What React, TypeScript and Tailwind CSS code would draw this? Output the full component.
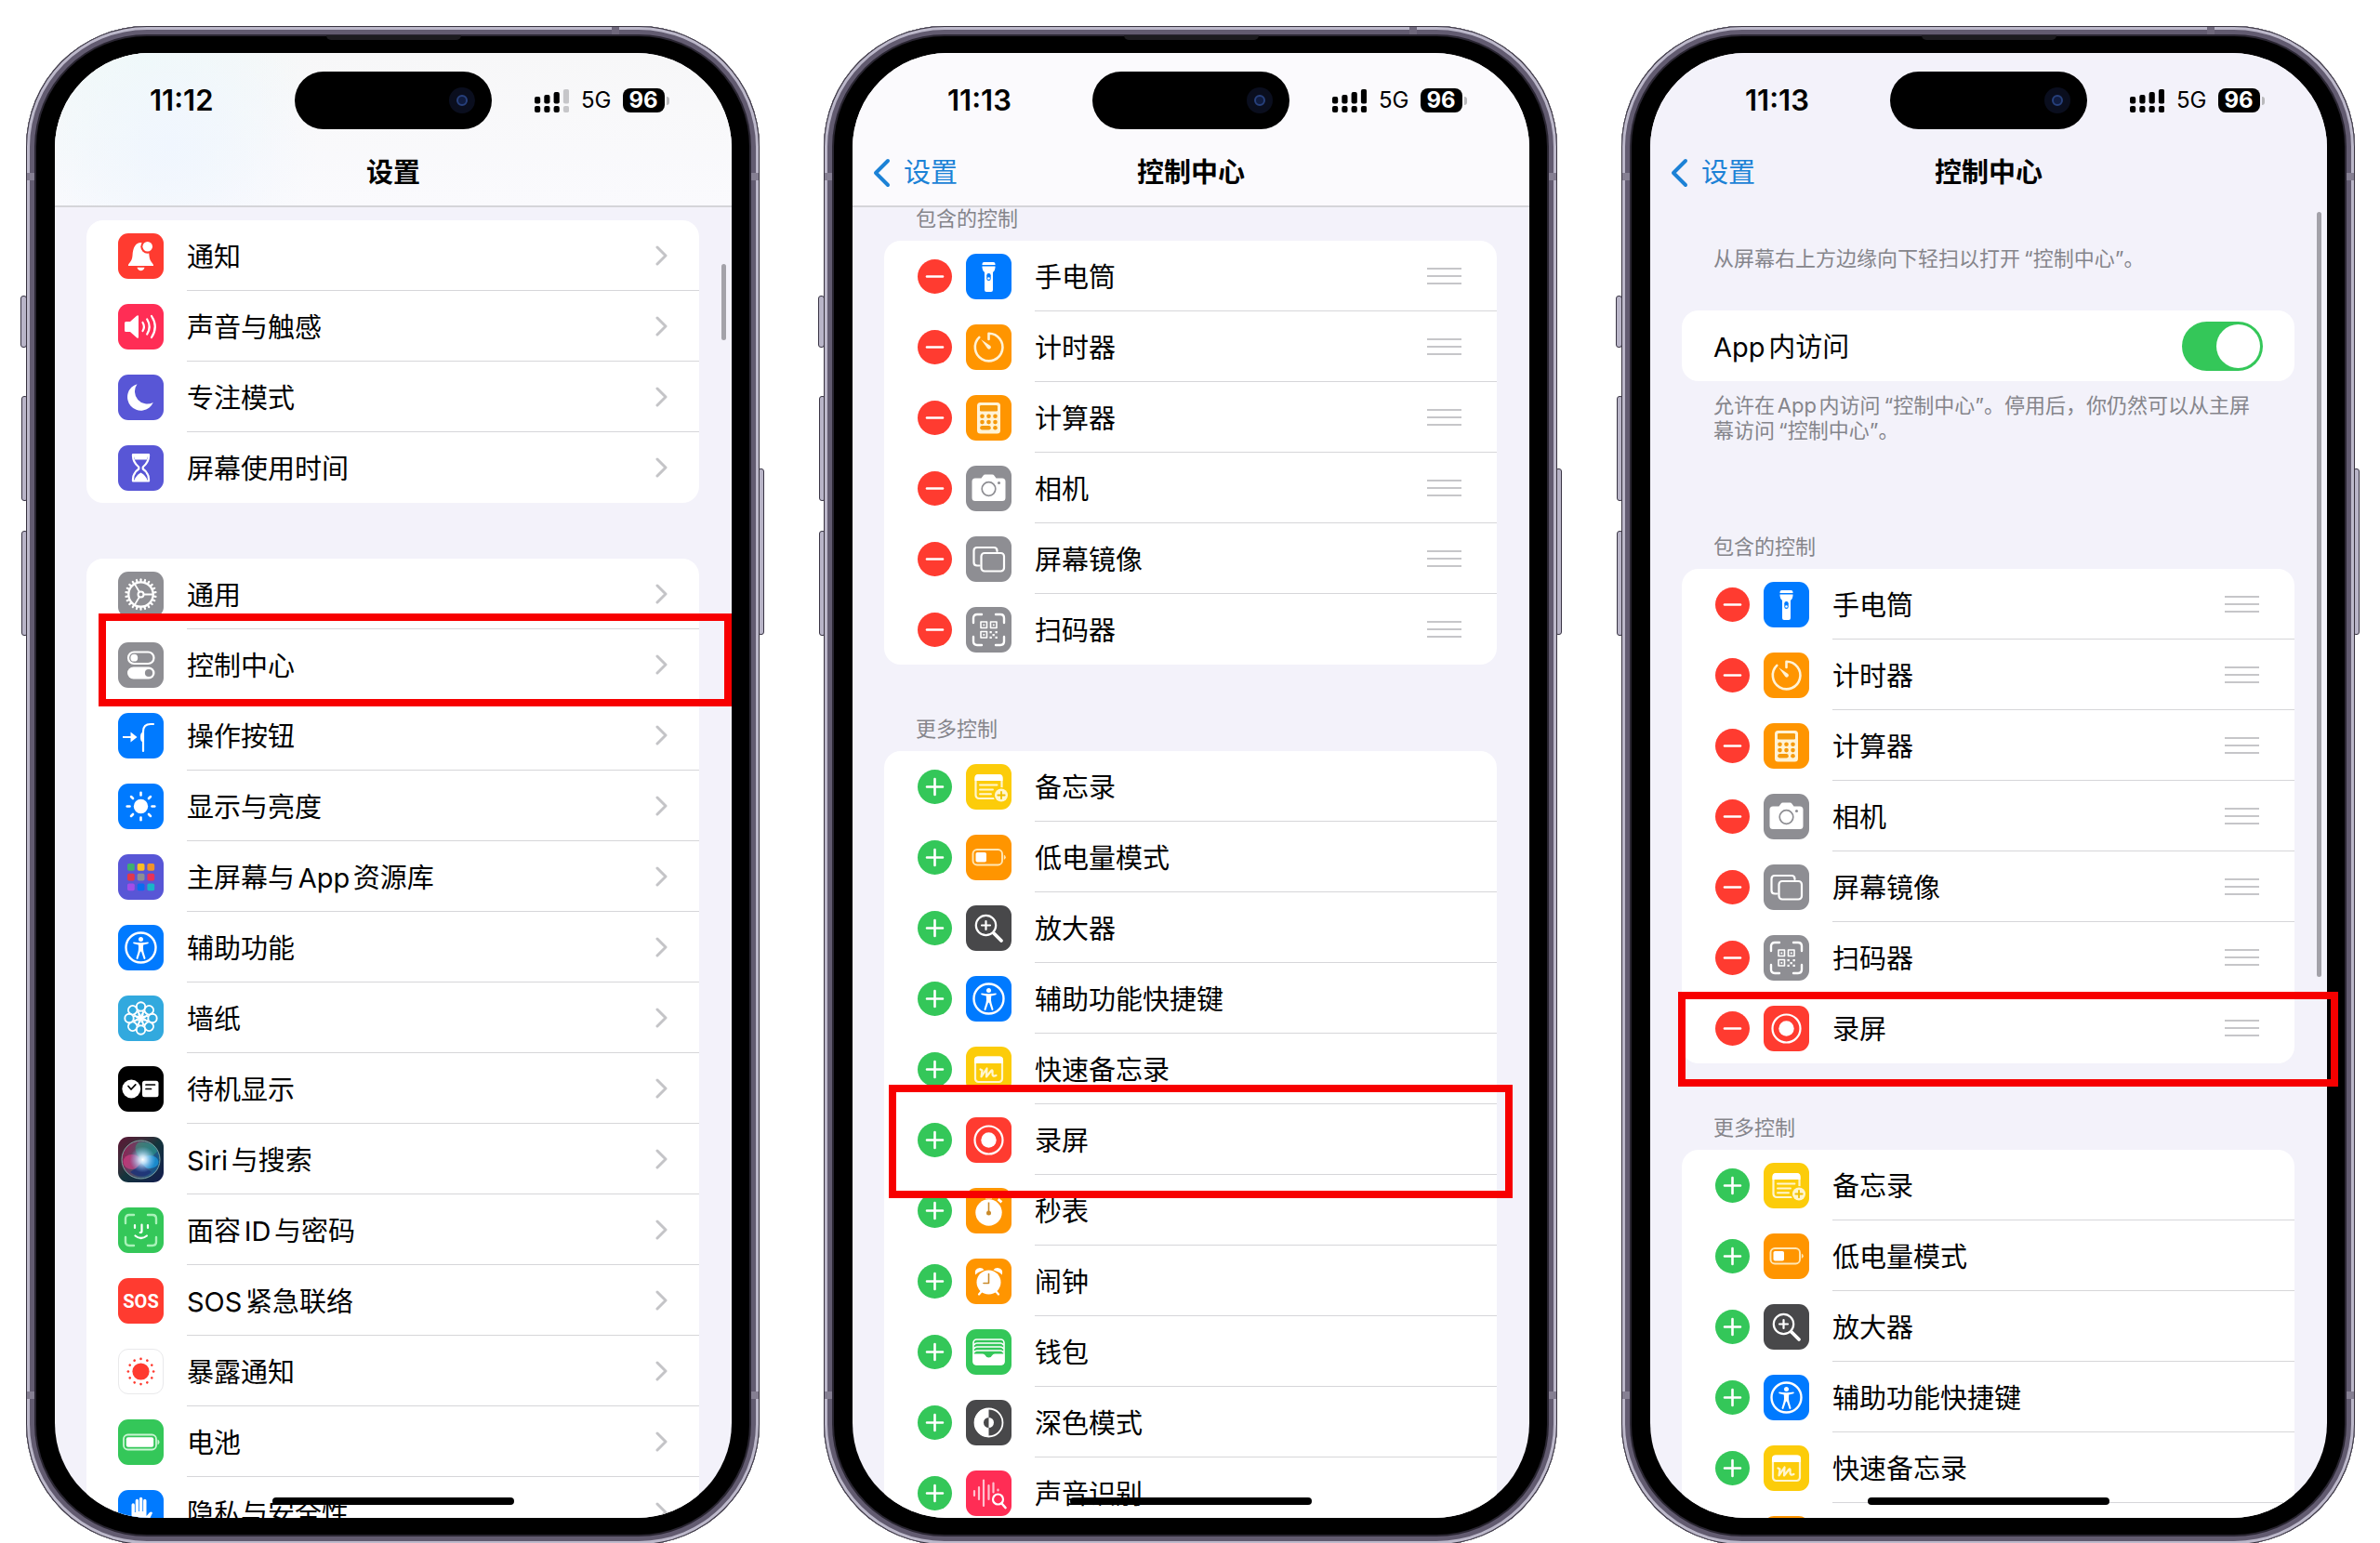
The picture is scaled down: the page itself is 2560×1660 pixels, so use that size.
import React from "react";

const range = (n: number) => Array.from({ length: n }, (_, i) => i);

/* ---------- icons, all drawn on a 49 x 49 tile ---------- */

const stroke = {
  fill: "none",
  stroke: "#fff",
  strokeWidth: 2.2,
  strokeLinecap: "round",
  strokeLinejoin: "round",
} as const;

const Brackets = ({ color = "#fff" }: { color?: string }) => (
  <path
    {...stroke}
    stroke={color}
    strokeWidth={2.4}
    d="M8 17v-5q0-4 4-4h5M32 8h5q4 0 4 4v5M41 32v5q0 4-4 4h-5M17 41h-5q-4 0-4-4v-5"
  />
);

const Person = () => (
  <>
    <circle cx="24.5" cy="24.5" r="16" {...stroke} strokeWidth={2.4} />
    <circle cx="24.5" cy="15.6" r="2.5" fill="#fff" />
    <path
      fill="#fff"
      d="M16.6 18.6q-1 .9.3 1.7l4.9 1.2q.6 4-.4 8l-1.9 6.3q0 1.6 1.8 1l2.7-8h1l2.7 8q1.8.6 1.8-1l-1.9-6.3q-1-4-.4-8l4.9-1.2q1.3-.8.3-1.7-7.9 1.5-15.8 0z"
    />
  </>
);

const icons: Record<string, { bg: string; art: React.ReactNode }> = {
  bell: {
    bg: "bg-[#ff3b30]",
    art: (
      <>
        <path fill="#fff" d="M11 35c-.6-2.6 4-3.6 4.500-11 .5-9 3.500-14 9-14s8.500 5 9 14c.5 7.400 5.100 8.400 4.500 11z" />
        <path fill="#fff" d="M20.5 36.8h8q-1 3.400-4 3.400t-4-3.400z" />
        <circle cx="31.7" cy="14.3" r="7.4" fill="#ff3b30" />
        <circle cx="31.7" cy="14.3" r="5.3" fill="#fff" />
      </>
    ),
  },
  sound: {
    bg: "bg-[#ff2d55]",
    art: (
      <>
        <path fill="#fff" d="M7 20.5q0-1.5 1.5-1.5H13l7-6.2q2-1.400 2 .8v21.800q0 2.200-2 .8L13 30H8.500Q7 30 7 28.500z" />
        <path {...stroke} d="M26.5 20q2.800 4.500 0 9M31.200 16.500q5 8 0 16M36 13q7.600 11.500 0 23" />
      </>
    ),
  },
  moon: {
    bg: "bg-[#5856d6]",
    art: <path fill="#fff" d="M20.5 10.2A14.5 14.5 0 1 0 37.8 30 13.5 13.5 0 0 1 20.5 10.2z" />,
  },
  hourglass: {
    bg: "bg-[#5856d6]",
    art: (
      <>
        <path {...stroke} d="M16 10h17q.6 8-6.3 13.5v2Q33.6 30 33 38.5H16q-.6-8.5 6.3-13v-2Q15.4 18 16 10z" />
        <path fill="#fff" d="M17 10h15q.3 3-1.2 5.5H18.2Q16.700 13 17 10zM17.500 38q1-5 7-8.500 6 3.500 7 8.500z" />
      </>
    ),
  },
  gear: {
    bg: "bg-[#8e8e93]",
    art: (
      <g {...stroke}>
        <circle cx="24.5" cy="24.5" r="13.2" strokeWidth={2.3} />
        <circle cx="24.5" cy="24.5" r="3" strokeWidth={2} />
        {range(22).map((i) => (
          <path key={i} d="M24.5 10.5v-2.2" transform={`rotate(${i * (360 / 22)} 24.5 24.5)`} />
        ))}
        <path strokeWidth={1.8} d="M27.7 24.5h10M22.9 21.7l-5.3-8.8M22.9 27.3l-5.3 8.8" />
      </g>
    ),
  },
  toggles: {
    bg: "bg-[#8e8e93]",
    art: (
      <>
        <rect x="11" y="10.5" width="27.5" height="12.5" rx="6.2" {...stroke} />
        <circle cx="17.3" cy="16.7" r="3.9" fill="#fff" />
        <rect x="10" y="26.5" width="29.5" height="13" rx="6.5" fill="#fff" />
        <circle cx="33" cy="33" r="4.1" fill="#8e8e93" />
      </>
    ),
  },
  action: {
    bg: "bg-[#007aff]",
    art: (
      <>
        <path {...stroke} d="M27 41V20q0-8 8-8h3" />
        <path {...stroke} strokeLinecap="butt" d="M5 26h11" />
        <path fill="#fff" d="M13.5 20.5l7 5.5-7 5.5zM26 21q-2 .5-2 5t2 5z" />
      </>
    ),
  },
  sun: {
    bg: "bg-[#007aff]",
    art: (
      <>
        <circle cx="24.5" cy="24.5" r="7.7" fill="#fff" />
        {range(8).map((i) => (
          <path key={i} {...stroke} strokeWidth={2.6} d="M24.5 12.5v-2.8" transform={`rotate(${i * 45} 24.5 24.5)`} />
        ))}
      </>
    ),
  },
  apps: {
    bg: "bg-[#5856d6]",
    art: (
      <>
        {["#3fae6f", "#fbbf24", "#f0932b", "#e0384b", "#8e8e93", "#e8325a", "#a24de8", "#0a6cf0", "#18b5c8"].map((c, i) => (
          <rect key={c} x={10 + (i % 3) * 10.7} y={10 + Math.floor(i / 3) * 10.7} width="7.8" height="7.8" rx="1.8" fill={c} />
        ))}
      </>
    ),
  },
  person: { bg: "bg-[#007aff]", art: <Person /> },
  flower: {
    bg: "bg-[#32a9de]",
    art: (
      <g fill="none" stroke="#fff" strokeWidth={1.9}>
        {range(8).map((i) => (
          <g key={i} transform={`rotate(${i * 45} 24.5 24.5)`}>
            <circle cx="24.5" cy="12" r="4.7" />
            <path d="M24.5 24.5q-3.600-4-2-8.200M24.500 24.500q3.600-4 2-8.200" strokeWidth={1.5} />
          </g>
        ))}
      </g>
    ),
  },
  standby: {
    bg: "bg-black",
    art: (
      <>
        <circle cx="14.3" cy="24.5" r="9.9" fill="#fff" />
        <rect x="26" y="15.8" width="17.5" height="17.4" rx="2.5" fill="#fff" />
        <path {...stroke} stroke="#000" strokeWidth={1.7} d="M11 21.5l3 3.5 4.800-5.200M30 20h9.500M30 24.500h5.500" />
      </>
    ),
  },
  siri: {
    bg: "bg-linear-to-br from-[#5c0f35] via-[#14343b] to-[#141a4e]",
    art: (
      <>
        <defs>
          <radialGradient id="siri-core" cx="52%" cy="50%" r="50%">
            <stop offset="0" stopColor="#fff" />
            <stop offset=".3" stopColor="#d5ecff" stopOpacity=".85" />
            <stop offset="1" stopColor="#7fc4ff" stopOpacity="0" />
          </radialGradient>
          <linearGradient id="siri-orb" x1="0" y1=".4" x2="1" y2=".6">
            <stop offset="0" stopColor="#d01f6c" />
            <stop offset=".45" stopColor="#6f6d8c" />
            <stop offset="1" stopColor="#0f7fc9" />
          </linearGradient>
        </defs>
        <circle cx="24.5" cy="24.5" r="20.5" fill="url(#siri-orb)" fillOpacity=".55" stroke="#7fa6a3" strokeWidth="1" />
        <path fill="#2bb08c" fillOpacity=".45" d="M24.5 24Q14 12 22 6q16-2 20 10-8 9-17.500 8z" />
        <ellipse cx="15" cy="27" rx="9.5" ry="8" fill="#e0408a" fillOpacity=".6" />
        <ellipse cx="34" cy="27" rx="9.5" ry="7" fill="#1aa0e8" fillOpacity=".7" />
        <path fill="#1c2f78" fillOpacity=".8" d="M13 38q7-4 12-10 5 6 11 10-11 9-23 0z" />
        <circle cx="26" cy="24.5" r="14" fill="url(#siri-core)" />
      </>
    ),
  },
  face: {
    bg: "bg-[#34c759]",
    art: (
      <>
        <Brackets color="#a9f2b9" />
        <path {...stroke} d="M18 19v3M32 19v3M25.5 18.5v7q0 1.5-1.8 1.5M18.5 30.5q6.2 5 12.4 0" />
      </>
    ),
  },
  sos: {
    bg: "bg-[#ff3b30]",
    art: (
      <text x="24.5" y="32" textAnchor="middle" fill="#fff" className="font-['Roboto',sans-serif] text-[20px] font-bold">
        SOS
      </text>
    ),
  },
  exposure: {
    bg: "bg-white border border-[#e9e9eb]",
    art: (
      <g fill="#ff3b30">
        <circle cx="24.5" cy="24.5" r="9.5" />
        {range(12).map((i) => (
          <circle key={i} cx="24.5" cy="10.3" r="1.4" transform={`rotate(${i * 30} 24.5 24.5)`} />
        ))}
      </g>
    ),
  },
  battery: {
    bg: "bg-[#34c759]",
    art: (
      <>
        <rect x="6" y="16.5" width="35" height="16" rx="4.5" {...stroke} strokeWidth={1.8} stroke="#c9f5d3" />
        <rect x="8.8" y="19.3" width="29.4" height="10.4" rx="2" fill="#fff" />
        <path fill="#c9f5d3" d="M42.5 21.5q2 1 2 3t-2 3z" />
      </>
    ),
  },
  hand: {
    bg: "bg-[#007aff]",
    art: (
      <path
        fill="#fff"
        d="M14.5 16a1.7 1.7 0 0 1 3.4 0v8h.8V11.5a1.7 1.7 0 0 1 3.4 0V23h.8V9.5a1.7 1.7 0 0 1 3.4 0V23h.8V11.5a1.7 1.7 0 0 1 3.4 0V28l3.3-3.8q2.2-1.4 3.2.6L32 35q-3 6-9 6-8.5 0-8.5-9z"
      />
    ),
  },
  torch: {
    bg: "bg-[#007aff]",
    art: (
      <>
        <path fill="#fff" d="M17.5 11q0-2 2-2h10q2 0 2 2v1h-14zM17.5 13.5h14v1.5q0 2.5-2.5 5v19q0 2-2 2h-5q-2 0-2-2V20q-2.500-2.500-2.500-5z" />
        <rect x="22.3" y="21" width="4.4" height="8" rx="2.2" fill="#007aff" />
        <circle cx="24.5" cy="26.5" r="1.3" fill="#fff" />
      </>
    ),
  },
  timer: {
    bg: "bg-[#ff9500]",
    art: (
      <>
        <path {...stroke} stroke="#fff3d6" strokeWidth={2.6} d="M24.5 16v-6.3a14.8 14.8 0 1 1-10.2 4.2" />
        <path fill="#fff3d6" d="M16.3 16.3l10 6.8q1.400 1.600 0 3t-3 0z" />
      </>
    ),
  },
  calculator: {
    bg: "bg-[#ff9500]",
    art: (
      <>
        <rect x="12" y="8" width="25" height="33.5" rx="3.5" fill="#fff3d6" />
        <g fill="#f59a0c">
          <rect x="15" y="11" width="19" height="6.5" rx="1.2" />
          {range(6).map((i) => (
            <circle key={i} cx={17.5 + (i % 3) * 7} cy={22.8 + Math.floor(i / 3) * 6.3} r="2.3" />
          ))}
          <rect x="15.2" y="33" width="11.6" height="4.4" rx="2.2" />
          <circle cx="31.5" cy="35.2" r="2.3" />
        </g>
      </>
    ),
  },
  camera: {
    bg: "bg-[#8e8e93]",
    art: (
      <>
        <path fill="#fff" d="M10 13.5h6.5l2-2.8q.8-1.2 2.2-1.2h7.6q1.400 0 2.200 1.200l2 2.800H39q3.500 0 3.500 3.500v17.500q0 3.500-3.500 3.500H10q-3.500 0-3.500-3.500V17q0-3.500 3.500-3.500z" />
        <circle cx="24.5" cy="25" r="7.3" fill="none" stroke="#8e8e93" strokeWidth="1.7" />
        <circle cx="35.5" cy="18.5" r="1.5" fill="#8e8e93" />
      </>
    ),
  },
  mirror: {
    bg: "bg-[#8e8e93]",
    art: (
      <>
        <path {...stroke} d="M14.5 31.5H12q-3.5 0-3.5-3.5V15.5Q8.5 12 12 12h18q3.5 0 3.5 3.5v.5" />
        <rect x="16.5" y="18" width="24.5" height="19.5" rx="3.5" {...stroke} />
      </>
    ),
  },
  qr: {
    bg: "bg-[#8e8e93]",
    art: (
      <>
        <Brackets />
        <g {...stroke} strokeWidth={1.6}>
          <rect x="16" y="16" width="6.5" height="6.5" />
          <rect x="26.5" y="16" width="6.5" height="6.5" />
          <rect x="16" y="26.5" width="6.5" height="6.5" />
        </g>
        <path
          fill="#fff"
          d="M18.4 18.4h1.8v1.8h-1.8zM28.9 18.4h1.8v1.8h-1.8zM18.4 28.9h1.8v1.8h-1.8zM25.5 26h2.3v2.3h-2.3zM31.5 26h2.3v2.3h-2.3zM28.5 28.9h2.3v2.3h-2.3zM25.5 31.7h2.3V34h-2.3zM31.5 31.7h2.3V34h-2.3z"
        />
      </>
    ),
  },
  notes: {
    bg: "bg-[#fccc0a]",
    art: (
      <>
        <rect x="10.5" y="12" width="28" height="25" rx="3.5" {...stroke} stroke="#fff6cf" />
        <path fill="#fff" d="M9.5 18v-3.5q0-3.5 3.5-3.5h23q3.5 0 3.5 3.5V18z" />
        <path {...stroke} stroke="#fff6cf" strokeWidth={1.9} d="M15 22.5h18.5M15 27.5h14M15 32.3h12" />
        <circle cx="38" cy="33.5" r="8.5" fill="#fccc0a" />
        <circle cx="38" cy="33.5" r="7" fill="#fff6cf" />
        <path {...stroke} stroke="#f0c000" strokeWidth={1.8} d="M38 29.8v7.4M34.3 33.5h7.4" />
      </>
    ),
  },
  lowpower: {
    bg: "bg-[#ff9500]",
    art: (
      <>
        <rect x="7.5" y="16" width="31.5" height="16.5" rx="4.5" {...stroke} strokeWidth={1.9} stroke="#ffe7b5" />
        <rect x="10.5" y="19" width="11.5" height="10.5" rx="1.8" fill="#fff" />
        <path fill="#ffe7b5" d="M40.8 21.5q2 1 2 2.8t-2 2.8z" />
      </>
    ),
  },
  magnifier: {
    bg: "bg-[#48484a]",
    art: (
      <>
        <circle cx="21.5" cy="21.5" r="10.7" {...stroke} />
        <path {...stroke} d="M21.5 17v9M17 21.5h9" />
        <path {...stroke} strokeWidth={3.8} d="M30 30l8 8" />
      </>
    ),
  },
  quicknote: {
    bg: "bg-[#fccc0a]",
    art: (
      <>
        <rect x="10" y="11.5" width="29" height="26.5" rx="3.5" {...stroke} stroke="#fff6cf" />
        <path fill="#fff" d="M9 18v-4q0-3.5 3.5-3.5h24Q40 10.5 40 14v4z" />
        <path {...stroke} stroke="#fff6cf" d="M15.5 24.5l2 1-1 7 6-9-.5 9 5.5-7q1.5-.5 1 2.5-.5 5 4 3" />
      </>
    ),
  },
  record: {
    bg: "bg-[#ff3b30]",
    art: (
      <>
        <circle cx="24.5" cy="24.5" r="15" {...stroke} />
        <circle cx="24.5" cy="24.5" r="8.2" fill="#fff" />
      </>
    ),
  },
  stopwatch: {
    bg: "bg-[#ff9500]",
    art: (
      <>
        <circle cx="24.5" cy="26.5" r="14.2" fill="#fff" />
        <path fill="#fff" d="M21 7.5h7v4h-7zM35.5 11l3.8 3.2-1.8 2.2-3.8-3.2z" />
        <path stroke="#c98a2a" strokeWidth="1.6" d="M24.5 15.5v11" />
        <circle cx="24.5" cy="27" r="2.5" fill="#c98a2a" />
      </>
    ),
  },
  alarm: {
    bg: "bg-[#ff9500]",
    art: (
      <>
        <path {...stroke} d="M14 38.5l3-3.5M35 38.5L32 35" />
        <path fill="#fff" d="M10 17.5q-1.5-7 5-7.5 3 0 4.5 2.2-6 2-9.5 5.3zM39 17.5q1.5-7-5-7.5-3 0-4.5 2.2 6 2 9.5 5.3z" />
        <circle cx="24.5" cy="25.5" r="13" fill="#fff" />
        <path {...stroke} stroke="#c98a2a" strokeWidth={1.6} d="M24.5 16.5v10h-5.5" />
      </>
    ),
  },
  wallet: {
    bg: "bg-[#34c759]",
    art: (
      <>
        <rect x="8" y="11" width="33" height="27" rx="3.5" {...stroke} strokeWidth={1.6} />
        <path {...stroke} strokeWidth={1.6} d="M9 16.5q1-1.5 3-1.5h25q2 0 3 1.5M9 20.5Q10 19 12 19h25q2 0 3 1.5M9 24.5Q10 23 12 23h25q2 0 3 1.5" />
        <path fill="#fff" d="M7.5 26.5H18q2 0 2.7 1.5 1.3 2.5 3.8 2.5t3.8-2.5Q29 26.5 31 26.5h10.5V35q0 3.5-3.5 3.5H11q-3.5 0-3.5-3.5z" />
      </>
    ),
  },
  darkmode: {
    bg: "bg-[#48484a]",
    art: (
      <>
        <circle cx="24.5" cy="24.5" r="15" {...stroke} strokeWidth={1.8} />
        <path fill="#fff" d="M24.5 9a15.5 15.5 0 0 0 0 31v-10a5.5 5.5 0 0 1 0-11z" />
        <path fill="#fff" d="M24.5 19a5.5 5.5 0 0 1 0 11z" />
      </>
    ),
  },
  soundsearch: {
    bg: "bg-[#ff2d55]",
    art: (
      <>
        <path {...stroke} stroke="#ffc2cf" d="M9 22v5M14 18v13M19 10.5v27.5M24.5 16v15M29.5 13.5v10M34.5 20.5v1" />
        <circle cx="34.5" cy="31" r="5.5" {...stroke} />
        <path {...stroke} strokeWidth={2.6} d="M38.5 35.5l4 4.5" />
      </>
    ),
  },
};

const Tile = ({ name }: { name: string }) => (
  <span className={`block size-[49px] shrink-0 overflow-hidden rounded-[11px] ${icons[name].bg}`}>
    <svg viewBox="0 0 49 49" className="size-full" aria-hidden="true">
      {icons[name].art}
    </svg>
  </span>
);

/* ---------- lists ---------- */

type Item = { icon: string; label: string };

const alerts: Item[] = [
  { icon: "bell", label: "通知" },
  { icon: "sound", label: "声音与触感" },
  { icon: "moon", label: "专注模式" },
  { icon: "hourglass", label: "屏幕使用时间" },
];

const general: Item[] = [
  { icon: "gear", label: "通用" },
  { icon: "toggles", label: "控制中心" },
  { icon: "action", label: "操作按钮" },
  { icon: "sun", label: "显示与亮度" },
  { icon: "apps", label: "主屏幕与App资源库" },
  { icon: "person", label: "辅助功能" },
  { icon: "flower", label: "墙纸" },
  { icon: "standby", label: "待机显示" },
  { icon: "siri", label: "Siri与搜索" },
  { icon: "face", label: "面容ID与密码" },
  { icon: "sos", label: "SOS紧急联络" },
  { icon: "exposure", label: "暴露通知" },
  { icon: "battery", label: "电池" },
  { icon: "hand", label: "隐私与安全性" },
];

const included: Item[] = [
  { icon: "torch", label: "手电筒" },
  { icon: "timer", label: "计时器" },
  { icon: "calculator", label: "计算器" },
  { icon: "camera", label: "相机" },
  { icon: "mirror", label: "屏幕镜像" },
  { icon: "qr", label: "扫码器" },
];

const recording: Item = { icon: "record", label: "录屏" };

const moreStart: Item[] = [
  { icon: "notes", label: "备忘录" },
  { icon: "lowpower", label: "低电量模式" },
  { icon: "magnifier", label: "放大器" },
  { icon: "person", label: "辅助功能快捷键" },
  { icon: "quicknote", label: "快速备忘录" },
];

const moreEnd: Item[] = [
  { icon: "stopwatch", label: "秒表" },
  { icon: "alarm", label: "闹钟" },
  { icon: "wallet", label: "钱包" },
  { icon: "darkmode", label: "深色模式" },
  { icon: "soundsearch", label: "声音识别" },
];

const Card = ({ children }: { children: React.ReactNode }) => (
  <ul className="ml-[34px] mr-[35px] rounded-[18px] bg-white">{children}</ul>
);

const LinkRow = ({ icon, label }: Item) => (
  <li className="group">
    <a href="#" className="flex h-[76px] items-center gap-[25px] pl-[34px]">
      <Tile name={icon} />
      <span className="flex h-full flex-1 items-center justify-between border-b border-[#d6d6d9] pr-[34px] group-last:border-transparent">
        <span className="pt-[4px]">{label}</span>
        <svg viewBox="0 0 13 22" className="h-[22px] w-[13px]" aria-hidden="true">
          <path d="M2 2l9 9-9 9" fill="none" stroke="#c4c4c7" strokeWidth="3" strokeLinecap="round" strokeLinejoin="round" />
        </svg>
      </span>
    </a>
  </li>
);

const ControlRow = ({ icon, label, active }: Item & { active?: boolean }) => (
  <li className="group flex h-[76px] items-center pl-[36px]">
    <button
      type="button"
      aria-label={active ? `移除${label}` : `添加${label}`}
      className={`mr-[15px] size-[37px] shrink-0 rounded-full ${active ? "bg-[#ff3b30]" : "bg-[#34c759]"}`}
    >
      <svg viewBox="0 0 37 37" className="size-full" aria-hidden="true">
        <path d={active ? "M10 18.5h17" : "M10 18.5h17M18.5 10v17"} stroke="#fff" strokeWidth="2.6" strokeLinecap="round" />
      </svg>
    </button>
    <Tile name={icon} />
    <span className="ml-[25px] flex h-full flex-1 items-center justify-between border-b border-[#d6d6d9] pr-[38px] group-last:border-transparent">
      <span className="pt-[4px]">{label}</span>
      {active && (
        <button type="button" aria-label={`移动${label}`} className="flex w-[37px] flex-col gap-[6px]">
          <i className="h-[2px] bg-[#c6c6c9]" />
          <i className="h-[2px] bg-[#c6c6c9]" />
          <i className="h-[2px] bg-[#c6c6c9]" />
        </button>
      )}
    </span>
  </li>
);

const ControlSection = ({ title, items, active }: { title: string; items: Item[]; active?: boolean }) => (
  <section>
    <h2 className="px-[68px] pb-[12px] text-[22px] leading-[24px] text-[#85858b]">{title}</h2>
    <Card>
      {items.map((item) => (
        <ControlRow key={item.label} {...item} active={active} />
      ))}
    </Card>
  </section>
);

/* ---------- phone ---------- */

const Signal = ({ weak }: { weak?: boolean }) => (
  <svg viewBox="0 0 37 25" className="h-[25px] w-[37px]" aria-hidden="true">
    {[8, 6, 3, 0].map((top, i) => (
      <g key={top} fill={weak && i === 3 ? "#c6c6c9" : "#000"}>
        <rect x={i * 10.3} y={top} width="6.2" height={15.5 - top} rx="2" />
        <rect x={i * 10.3} y="18" width="6.2" height="7" rx="2" />
      </g>
    ))}
  </svg>
);

type PhoneProps = {
  time: string;
  title: string;
  back?: string;
  weak?: boolean;
  header: string;
  highlight: string;
  scrollbar?: string;
  children: React.ReactNode;
};

const sideButton = "absolute w-[7px] rounded-[3px] border border-[#3a3545] bg-[#b9b5c8]";

const Phone = ({ time, title, back, weak, header, highlight, scrollbar, children }: PhoneProps) => (
  <div className="relative">
    <i className={`${sideButton} -left-[6px] top-[290px] h-[56px]`} />
    <i className={`${sideButton} -left-[5px] top-[398px] h-[113px]`} />
    <i className={`${sideButton} -left-[5px] top-[543px] h-[113px]`} />
    <i className={`${sideButton} -right-[5px] top-[476px] h-[179px]`} />
    <div className="relative rounded-[130px] bg-black py-[29px] pl-[31px] pr-[30px] shadow-[inset_0_0_0_1px_#38333f,inset_0_0_0_4px_#bcb8ca,inset_0_0_0_9px_#625b70,inset_0_0_0_11px_#2a2632]">
      <i className="absolute left-[323px] top-[10px] h-[5px] w-[145px] rounded-b-[5px] bg-[#1c1b1f]" />
      <i className="absolute left-[630px] top-[1px] h-[8px] w-[8px] bg-[#6f687c]" />
      <i className="absolute left-[1px] top-[158px] h-[8px] w-[8px] bg-[#857f92]" />
      <i className="absolute right-[1px] top-[158px] h-[8px] w-[8px] bg-[#857f92]" />
      <i className="absolute left-[1px] top-[1469px] h-[8px] w-[8px] bg-[#857f92]" />
      <i className="absolute right-[1px] top-[1469px] h-[8px] w-[8px] bg-[#857f92]" />
      <div className="relative flex h-[1576px] flex-col overflow-hidden rounded-[102px] bg-[#f3f2fa]">
        <header className={`h-[166px] shrink-0 ${header}`}>
          <div className="grid h-[102px] grid-cols-[1fr_212px_1fr] items-center">
            <span className="pl-[102px] text-[31px] font-semibold">{time}</span>
            <div className="flex h-[62px] items-center justify-end rounded-full bg-black pr-[18px]">
              <span className="flex size-[28px] items-center justify-center rounded-full bg-[#0a0e1e]">
                <i className="size-[12px] rounded-full border-2 border-[#27407c] bg-[#101c40]" />
              </span>
            </div>
            <div className="flex items-center pl-[46px]">
              <Signal weak={weak} />
              <span className="ml-[13px] text-[24px]">5G</span>
              <span className="ml-[12px] rounded-[8px] bg-black px-[7px] text-[24px] leading-[26px] font-bold text-white">96</span>
              <i className="ml-[2px] h-[9px] w-[3px] rounded-r-full bg-[#b9b9bc]" />
            </div>
          </div>
          <div className="grid h-[54px] grid-cols-[1fr_auto_1fr] items-center">
            {back ? (
              <a href="#" className="flex items-center gap-[14px] pl-[21px] text-[#1c82d6]">
                <svg viewBox="0 0 20 32" className="h-[32px] w-[20px]" aria-hidden="true">
                  <path d="M17 3L4 16l13 13" fill="none" stroke="currentColor" strokeWidth="4" strokeLinecap="round" strokeLinejoin="round" />
                </svg>
                {back}
              </a>
            ) : (
              <span />
            )}
            <h1 className="font-semibold">{title}</h1>
          </div>
        </header>
        <main className="min-h-0 flex-1 overflow-hidden">{children}</main>
        {scrollbar && <i className={`absolute right-[6px] w-[5px] rounded-full bg-[#a3a2a9] ${scrollbar}`} />}
        <i className="absolute bottom-[14px] left-1/2 h-[8px] w-[260px] -translate-x-1/2 rounded-full bg-black" />
      </div>
    </div>
    <i className={`absolute border-8 border-[#f70000] ${highlight}`} />
  </div>
);

const App = () => {
  return (
    <div className="grid h-screen grid-cols-3 gap-[69px] overflow-hidden bg-white pt-[28px] pr-[27px] pl-[28px] font-['Inter','Noto_Sans_CJK_SC',sans-serif] text-[29px] leading-[36px] text-black [text-autospace:normal]">
      <Phone
        time="11:12"
        title="设置"
        weak
        header="border-b-2 border-[#d5d5d9] bg-[radial-gradient(circle_at_17%_60%,#f0f6fe_0,transparent_26%),radial-gradient(circle_at_13%_0,#effaf7_0,transparent_28%),linear-gradient(#f7f7f8,#fafafd)]"
        highlight="left-[78px] right-[30px] top-[632px] h-[100px]"
        scrollbar="top-[227px] h-[82px]"
      >
        <div className="flex flex-col gap-[60px] pt-[14px]">
          <Card>
            {alerts.map((item) => (
              <LinkRow key={item.label} {...item} />
            ))}
          </Card>
          <Card>
            {general.map((item) => (
              <LinkRow key={item.label} {...item} />
            ))}
          </Card>
        </div>
      </Phone>

      <Phone
        time="11:13"
        title="控制中心"
        back="设置"
        header="border-b-2 border-[#d5d5d9] bg-[#fbfafd]"
        highlight="left-[70px] right-[48px] top-[1139px] h-[122px]"
      >
        <div className="flex flex-col gap-[57px]">
          <ControlSection title="包含的控制" items={included} active />
          <ControlSection title="更多控制" items={[...moreStart, recording, ...moreEnd]} />
        </div>
      </Phone>

      <Phone
        time="11:13"
        title="控制中心"
        back="设置"
        header="bg-[#f3f2fa]"
        highlight="left-[61px] right-[18px] top-[1039px] h-[102px]"
        scrollbar="top-[171px] h-[823px]"
      >
        <p className="px-[68px] pt-[42px] text-[22px] leading-[27px] text-[#85858b]">
          从屏幕右上方边缘向下轻扫以打开&thinsp;“控制中心”。
        </p>
        <div className="mt-[42px] mr-[35px] ml-[34px] flex h-[76px] items-center justify-between rounded-[18px] bg-white px-[34px]">
          <label htmlFor="in-app" className="pt-[4px]">
            App内访问
          </label>
          <span className="relative flex items-center">
            <input
              id="in-app"
              type="checkbox"
              defaultChecked
              className="peer h-[53px] w-[87px] appearance-none rounded-full bg-[#e9e9eb] checked:bg-[#34c759]"
            />
            <i className="pointer-events-none absolute left-[3px] size-[47px] rounded-full bg-white peer-checked:left-[37px]" />
          </span>
        </div>
        <p className="pt-[13px] pr-[76px] pb-[99px] pl-[68px] text-[22px] leading-[27px] text-[#85858b]">
          允许在App内访问&thinsp;“控制中心”。停用后，你仍然可以从主屏幕访问&thinsp;“控制中心”。
        </p>
        <div className="flex flex-col gap-[57px]">
          <ControlSection title="包含的控制" items={[...included, recording]} active />
          <ControlSection title="更多控制" items={[...moreStart, moreEnd[0]]} />
        </div>
      </Phone>
    </div>
  );
};

export default App;
